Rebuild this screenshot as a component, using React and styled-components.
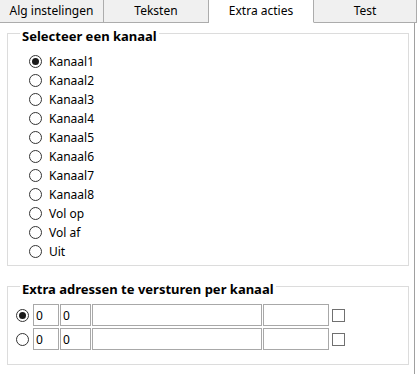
import React from 'react';
import styled, { createGlobalStyle } from 'styled-components';

const GlobalStyle = createGlobalStyle`
    html, body {
        margin: 0;
        padding: 0;
        background: #ffffff;
    }
    body {
        font-family: "Segoe UI", "Noto Sans", "Liberation Sans", sans-serif;
        font-size: 12px;
        color: #000;
        overflow: hidden;
    }
`;

const tabs = [
    {label: 'Alg instelingen', width: 104},
    {label: 'Teksten', width: 105},
    {label: 'Extra acties', width: 105, active: true},
    {label: 'Test', width: 103},
];

const channels = ['Kanaal1', 'Kanaal2', 'Kanaal3', 'Kanaal4', 'Kanaal5', 'Kanaal6', 'Kanaal7', 'Kanaal8', 'Vol op', 'Vol af', 'Uit'];

const Window = styled.div`
    width: 417px;
    height: 374px;
    display: flex;
    flex-direction: column;
`;

const TabStrip = styled.div`
    display: flex;
    height: 23px;
    flex: none;
`;

const Tab = styled.div`
    width: ${p => p.width}px;
    box-sizing: border-box;
    display: flex;
    align-items: center;
    justify-content: center;
    padding-bottom: 1px;
    background: ${p => p.active ? '#ffffff' : '#f0f0f0'};
    border-right: 1px solid #acacac;
    border-bottom: 1px solid ${p => p.active ? '#ffffff' : '#acacac'};
    white-space: nowrap;
`;

const Panel = styled.div`
    flex: 1;
    width: 415px;
    box-sizing: border-box;
    border-right: 1px solid #a0a0a0;
    padding: 10px 0 0 7px;
`;

const Group = styled.div`
    width: 402px;
    height: ${p => p.height}px;
    box-sizing: border-box;
    border: 1px solid #dcdcdc;
    margin-bottom: 20px;
`;

const GroupTitle = styled.div`
    width: fit-content;
    margin: -6px 0 0 12px;
    padding: 0 2px;
    background: #ffffff;
    font-weight: bold;
    font-size: 13px;
    line-height: 17px;
`;

const ChannelList = styled.div`
    display: flex;
    flex-direction: column;
    padding: 7px 0 0 21px;
`;

const RadioRow = styled.label`
    display: flex;
    align-items: center;
    height: 19px;
    gap: 7px;
`;

const Radio = styled.span`
    width: 13px;
    height: 13px;
    box-sizing: border-box;
    border-radius: 50%;
    border: 1px solid #333333;
    background: #ffffff;
    display: flex;
    align-items: center;
    justify-content: center;
    flex: none;

    &::after {
        content: '';
        width: 7px;
        height: 7px;
        border-radius: 50%;
        background: ${p => p.checked ? '#1a1a1a' : 'transparent'};
    }
`;

const AddressRows = styled.div`
    display: flex;
    flex-direction: column;
    gap: 2px;
    padding: 6px 0 0 8px;
`;

const AddressRow = styled.div`
    display: flex;
    align-items: center;
    height: 22px;
`;

const Field = styled.div`
    width: ${p => p.width}px;
    height: 22px;
    box-sizing: border-box;
    border: 1px solid #a8a8a8;
    margin-left: ${p => p.gap}px;
    padding-left: 2px;
    display: flex;
    align-items: center;
    flex: none;
`;

const CheckBox = styled.span`
    width: 13px;
    height: 13px;
    box-sizing: border-box;
    border: 1px solid #707070;
    background: #ffffff;
    margin-left: 3px;
    flex: none;
`;

const addresses = [
    {checked: true, a: '0', b: '0'},
    {checked: false, a: '0', b: '0'},
];

export default function App() {
    return (
        <Window>
            <GlobalStyle/>
            <TabStrip>
                {tabs.map(t => (
                    <Tab key={t.label} width={t.width} active={t.active}>{t.label}</Tab>
                ))}
            </TabStrip>
            <Panel>
                <Group height={233}>
                    <GroupTitle>Selecteer een kanaal</GroupTitle>
                    <ChannelList>
                        {channels.map((c, i) => (
                            <RadioRow key={c}>
                                <Radio checked={i === 0}/>
                                {c}
                            </RadioRow>
                        ))}
                    </ChannelList>
                </Group>
                <Group height={79}>
                    <GroupTitle>Extra adressen te versturen per kanaal</GroupTitle>
                    <AddressRows>
                        {addresses.map((r, i) => (
                            <AddressRow key={i}>
                                <Radio checked={r.checked}/>
                                <Field width={26} gap={4}>{r.a}</Field>
                                <Field width={31} gap={1}>{r.b}</Field>
                                <Field width={170} gap={1}/>
                                <Field width={66} gap={1}/>
                                <CheckBox/>
                            </AddressRow>
                        ))}
                    </AddressRows>
                </Group>
            </Panel>
        </Window>
    );
}
